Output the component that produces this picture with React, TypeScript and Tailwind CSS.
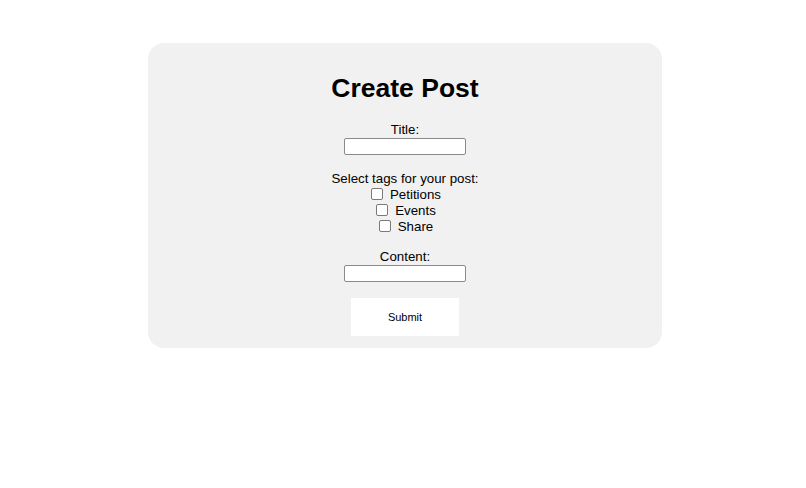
export default function App() {
  return (
    <div className="min-h-[488px] bg-white pt-[43px] flex justify-center items-start" style={{ fontFamily: '"Liberation Sans", Arial, sans-serif' }}>
      {/* Card */}
      <form
        className="w-[514px] ml-[4px] rounded-[16px] bg-[#f1f1f1] pt-[29px] pb-[12px] flex flex-col items-center text-black"
        onSubmit={(e) => e.preventDefault()}
      >
        <h1 className="text-[26.5px] leading-[32px] font-bold">Create Post</h1>

        <label className="mt-[18px] text-[13.3px] leading-[16px]">Title:</label>
        <input
          type="text"
          className="w-[122px] h-[17px] bg-white border border-[#8a8a8a] rounded-[2px] outline-none"
        />

        <div className="mt-[16px] text-[13.3px] leading-[16px]">Select tags for your post:</div>
        {["Petitions", "Events", "Share"].map((tag) => (
          <label key={tag} className="flex items-center gap-[7px] pl-[2px] text-[13.3px] leading-[16px]">
            <input
              type="checkbox"
              className="appearance-none w-[12px] h-[12px] mb-[2px] bg-white border border-[#7a7a7a] rounded-[2px]"
            />
            <span>{tag}</span>
          </label>
        ))}

        <label className="mt-[14px] text-[13.3px] leading-[16px]">Content:</label>
        <input
          type="text"
          className="w-[122px] h-[17px] bg-white border border-[#8a8a8a] rounded-[2px] outline-none"
        />

        <button type="submit" className="mt-[16px] w-[108px] h-[38px] bg-white text-[11px]">
          Submit
        </button>
      </form>
    </div>
  )
}
